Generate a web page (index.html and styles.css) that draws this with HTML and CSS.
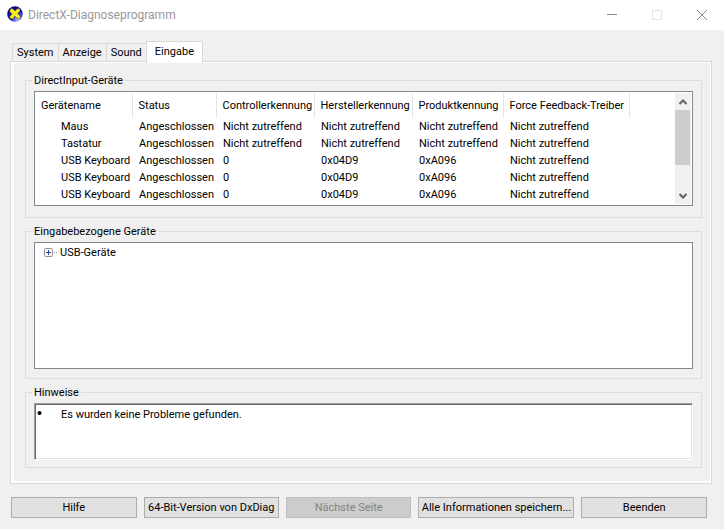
FILE: index.html
```html
<!DOCTYPE html>
<html lang="de">
  <head>
    <meta charset="UTF-8" />
    <meta name="viewport" content="width=device-width, initial-scale=1.0" />
    <title>DirectX-Diagnoseprogramm</title>
    <link rel="stylesheet" href="styles.css">
  </head>
  <body>
    <header class="titlebar">
      <svg class="app-icon" viewBox="0 0 16 16" aria-hidden="true">
        <defs>
          <radialGradient id="ball" cx="0.7" cy="0.85" r="0.8">
            <stop offset="0" stop-color="#c4ccf6" />
            <stop offset="0.35" stop-color="#5560d8" />
            <stop offset="0.7" stop-color="#1414c0" />
            <stop offset="1" stop-color="#06067c" />
          </radialGradient>
        </defs>
        <circle cx="8" cy="8" r="7.8" fill="url(#ball)" />
        <path d="M4 2.2 6.6 3.2 8 5 10 2.8 13 2.6 13 5 10.6 7.4 13.4 10.4 12.6 13 10.2 12.4 8 10 5.6 12.8 2.8 12.4 2.8 10.4 5 7.8 2.4 5.4Z" fill="#f7ee1a" stroke="#26220a" stroke-width="0.4" />
      </svg>
      <h1>DirectX-Diagnoseprogramm</h1>
      <div class="window-buttons">
        <button type="button" aria-label="Minimieren">
          <svg viewBox="0 0 10 10"><path d="M0 4.5H10" /></svg>
        </button>
        <button type="button" aria-label="Maximieren" disabled>
          <svg viewBox="0 0 10 10"><path d="M0.5 0.5H9.5V9.5H0.5Z" /></svg>
        </button>
        <button type="button" aria-label="Schließen">
          <svg viewBox="0 0 10 10"><path d="M0 0 10 10M10 0 0 10" /></svg>
        </button>
      </div>
    </header>

    <main>
      <div class="tabs" role="tablist">
        <button type="button" role="tab">System</button>
        <button type="button" role="tab">Anzeige</button>
        <button type="button" role="tab">Sound</button>
        <button type="button" role="tab" class="active" aria-selected="true">Eingabe</button>
      </div>

      <div class="panel" role="tabpanel">
        <fieldset>
          <legend>DirectInput-Geräte</legend>
          <div class="box device-list">
            <table>
              <colgroup>
                <col class="col-name">
                <col class="col-status">
                <col class="col-id">
                <col class="col-id">
                <col class="col-product">
                <col class="col-driver">
                <col>
              </colgroup>
              <thead>
                <tr>
                  <th>Gerätename</th>
                  <th>Status</th>
                  <th>Controllerkennung</th>
                  <th>Herstellerkennung</th>
                  <th>Produktkennung</th>
                  <th>Force Feedback-Treiber</th>
                  <td></td>
                </tr>
              </thead>
              <tbody>
                <tr>
                  <td>Maus</td>
                  <td>Angeschlossen</td>
                  <td>Nicht zutreffend</td>
                  <td>Nicht zutreffend</td>
                  <td>Nicht zutreffend</td>
                  <td>Nicht zutreffend</td>
                </tr>
                <tr>
                  <td>Tastatur</td>
                  <td>Angeschlossen</td>
                  <td>Nicht zutreffend</td>
                  <td>Nicht zutreffend</td>
                  <td>Nicht zutreffend</td>
                  <td>Nicht zutreffend</td>
                </tr>
                <tr>
                  <td>USB Keyboard</td>
                  <td>Angeschlossen</td>
                  <td>0</td>
                  <td>0x04D9</td>
                  <td>0xA096</td>
                  <td>Nicht zutreffend</td>
                </tr>
                <tr>
                  <td>USB Keyboard</td>
                  <td>Angeschlossen</td>
                  <td>0</td>
                  <td>0x04D9</td>
                  <td>0xA096</td>
                  <td>Nicht zutreffend</td>
                </tr>
                <tr>
                  <td>USB Keyboard</td>
                  <td>Angeschlossen</td>
                  <td>0</td>
                  <td>0x04D9</td>
                  <td>0xA096</td>
                  <td>Nicht zutreffend</td>
                </tr>
              </tbody>
            </table>
            <div class="scrollbar">
              <button type="button" aria-label="Nach oben">
                <svg viewBox="0 0 8 6"><path d="M0.5 5 4 1.5 7.5 5" /></svg>
              </button>
              <div class="track"><div class="thumb"></div></div>
              <button type="button" aria-label="Nach unten">
                <svg viewBox="0 0 8 6"><path d="M0.5 1 4 4.5 7.5 1" /></svg>
              </button>
            </div>
          </div>
        </fieldset>

        <fieldset class="related">
          <legend>Eingabebezogene Geräte</legend>
          <div class="box tree">
            <button type="button" class="tree-item" aria-expanded="false">
              <svg viewBox="0 0 13 9" aria-hidden="true">
                <rect x="0.5" y="0.5" width="8" height="8" rx="1" fill="#f6f6f6" stroke="#919191" />
                <path d="M2 4.5H7M4.5 2V7" stroke="#2b4a9c" />
                <path d="M10 4.5H11M12 4.5H13" stroke="#9a9a9a" />
              </svg>
              USB-Geräte
            </button>
          </div>
        </fieldset>

        <fieldset class="hints">
          <legend>Hinweise</legend>
          <ul class="notes">
            <li>Es wurden keine Probleme gefunden.</li>
          </ul>
        </fieldset>
      </div>

      <div class="actions">
        <button type="button">Hilfe</button>
        <button type="button" class="medium">64-Bit-Version von DxDiag</button>
        <button type="button" disabled>Nächste Seite</button>
        <button type="button" class="wide">Alle Informationen speichern...</button>
        <button type="button">Beenden</button>
      </div>
    </main>
  </body>
</html>
```
FILE: styles.css
```css
* {
  box-sizing: border-box;
}

body {
  display: flex;
  flex-direction: column;
  min-height: 100vh;
  margin: 0;
  background-color: #f0f0f0;
  color: #000;
  font-family: Roboto, "Liberation Sans", sans-serif;
  font-size: 11px;
  line-height: 15px;
}

button {
  margin: 0;
  padding: 0;
  border: none;
  background: none;
  color: inherit;
  font: inherit;
  white-space: nowrap;
}

/* Title bar */
.titlebar {
  display: flex;
  align-items: center;
  height: 30px;
  padding-left: 7px;
  background-color: #fff;
}

.app-icon {
  width: 16px;
  height: 16px;
  margin-bottom: 2px;
}

h1 {
  flex: 1;
  margin: 0 0 0 5px;
  color: #999;
  font-size: 12px;
  font-weight: normal;
}

.window-buttons {
  display: flex;
}

.window-buttons button {
  display: flex;
  align-items: center;
  justify-content: center;
  width: 45px;
  height: 28px;
}

.window-buttons svg {
  width: 10px;
  height: 10px;
  fill: none;
  stroke: #888;
}

.window-buttons button:disabled svg {
  stroke: #e3e3e3;
}

main {
  flex: 1;
  display: flex;
  flex-direction: column;
  padding: 11px 12px 11px 10px;
}

/* Tabs */
.tabs {
  display: flex;
  align-items: flex-end;
  height: 21px;
  margin-left: 2px;
  margin-bottom: -1px;
}

.tabs button {
  height: 19px;
  padding: 0 4px;
  border: 1px solid #d9d9d9;
  border-left-width: 0;
}

.tabs button:first-child {
  border-left-width: 1px;
}

.tabs .active {
  z-index: 1;
  height: 22px;
  margin-bottom: -1px;
  padding: 0 8px 2px;
  border-bottom: none;
  border-left-width: 1px;
  margin-left: -1px;
  background-color: #fff;
}

.panel {
  flex: 1;
  display: flex;
  flex-direction: column;
  gap: 6px;
  padding: 11px 9px 13px 14px;
  border: 1px solid #d9d9d9;
  box-shadow: inset 3px 1px #fff, inset -1px -2px #fff;
}

fieldset {
  min-width: 0;
  margin: 0;
  padding: 3px 8px 11px;
  border: 1px solid #dcdcdc;
}

legend {
  margin-left: -2px;
  padding: 0 2px;
}

.box {
  border: 1px solid #828790;
  background-color: #fff;
}

/* Device list */
.device-list {
  display: flex;
  padding: 1px 1px 1px 0;
  height: 115px;
  overflow: hidden;
}

table {
  flex: 1;
  width: 100%;
  align-self: flex-start;
  border-collapse: collapse;
  table-layout: fixed;
}

.col-name {
  width: 97px;
}

.col-status {
  width: 84px;
}

.col-id {
  width: 98px;
}

.col-product {
  width: 91px;
}

.col-driver {
  width: 126px;
}

th,
td {
  height: 17px;
  padding: 0 0 0 7px;
  text-align: left;
  font-weight: normal;
  white-space: nowrap;
}

th {
  height: 25px;
  padding-left: 6px;
  border-right: 1px solid #e5e5e5;
}

tbody td:first-child {
  padding-left: 26px;
}

.scrollbar {
  display: flex;
  flex-direction: column;
  width: 16px;
  background-color: #f0f0f0;
}

.scrollbar button {
  display: flex;
  align-items: center;
  justify-content: center;
  height: 17px;
}

.scrollbar svg {
  width: 8px;
  height: 6px;
  fill: none;
  stroke: #606060;
  stroke-width: 2;
}

.track {
  flex: 1;
}

.thumb {
  width: 15px;
  height: 55px;
  background-color: #cdcdcd;
}

/* Device tree */
.related {
  padding-bottom: 9px;
}

.tree {
  min-height: 127px;
  padding: 2px 9px;
}

.tree-item {
  display: flex;
  align-items: center;
  gap: 3px;
}

.tree-item svg {
  width: 13px;
  height: 9px;
}

/* Notes */
.hints {
  padding-bottom: 7px;
}

.notes {
  min-height: 57px;
  margin: 0;
  padding: 2px 0 0 26px;
  border: 1px solid;
  border-color: #a0a0a0 #fff #fff #a0a0a0;
  background-color: #fff;
  box-shadow: inset 1px 1px #696969, inset -1px -1px #e3e3e3;
  list-style: none;
}

.notes li::before {
  content: "•";
  display: inline-block;
  width: 24px;
  margin-left: -24px;
  font-family: "Liberation Sans", sans-serif;
  font-size: 14px;
  line-height: 1;
}

/* Buttons */
.actions {
  display: flex;
  gap: 7px;
  padding: 13px 5px 0 1px;
}

.actions button {
  flex: 126 1 0;
  height: 21px;
  border: 1px solid #adadad;
  background-color: #e1e1e1;
}

.actions .medium {
  flex-grow: 136;
}

.actions .wide {
  flex-grow: 157;
}

.actions button:disabled {
  border-color: #bfbfbf;
  background-color: #ccc;
  color: #838383;
}
```
